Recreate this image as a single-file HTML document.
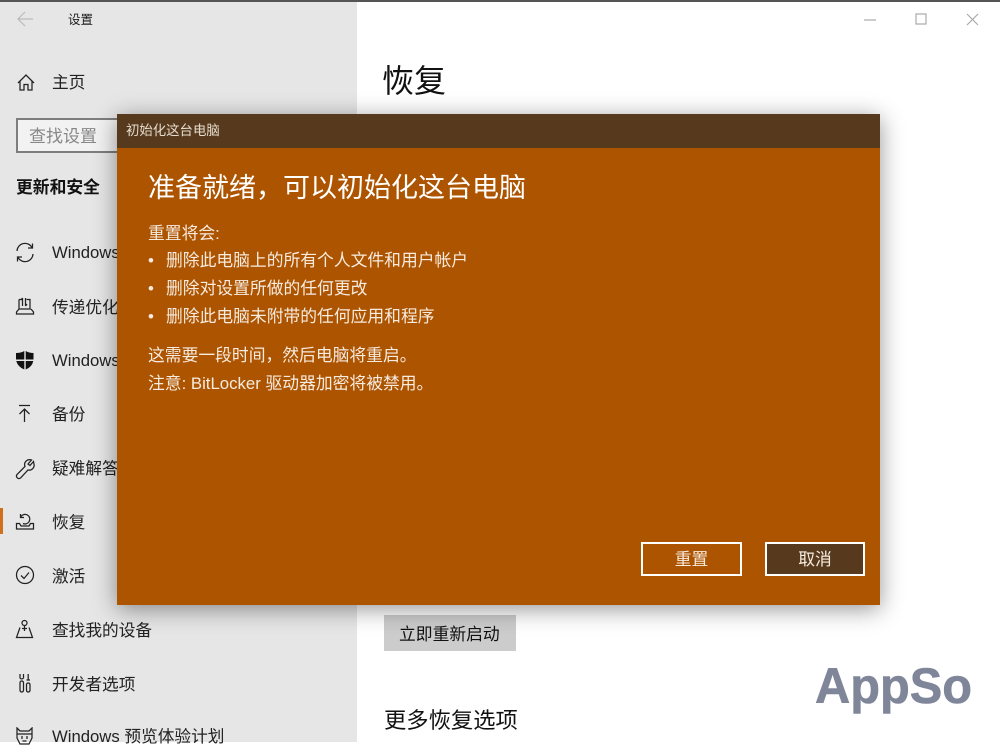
<!DOCTYPE html>
<html lang="zh-CN"><head><meta charset="utf-8"><title>设置</title>
<style>
html,body{margin:0;padding:0;background:#fff}
body{width:1000px;height:742px;position:relative;overflow:hidden;font-family:"Liberation Sans","Noto Sans CJK SC",sans-serif;color:#1c1c1c;filter:blur(.3px)}
.t{position:absolute;white-space:nowrap;line-height:24px;height:24px}
.s{left:52px;font-size:16.7px;color:#222}
.w{color:#f7ebdf;font-size:16.8px;left:148px}
svg.i{position:absolute;left:14px;width:22px;height:22px;fill:none;stroke:#222;stroke-width:1.25}
#side{position:absolute;left:0;top:0;width:357px;height:742px;background:#e6e6e6}
#dlg{position:absolute;left:117px;top:114px;width:763px;height:491px;background:#ad5400;box-shadow:0 4px 22px rgba(0,0,0,.42)}
#hd{position:absolute;left:0;top:0;width:763px;height:34px;background:#573a1e}
.b{position:absolute;top:542px;height:30px;border:2px solid #fff;line-height:32px;text-align:center;font-size:16.8px;color:#f7ebdf}
</style></head><body>
<div id="side"></div>
<div style="position:absolute;left:0;top:0;width:1000px;height:2px;background:#555"></div>

<svg style="position:absolute;left:16px;top:10px" width="20" height="18" fill="none" stroke="#bbb" stroke-width="1.2"><path d="M2 9H17M9 2L2 9L9 16"/></svg>
<div class="t" style="left:68px;top:8px;font-size:12.5px">设置</div>

<svg class="i" style="top:72px;left:16px" viewBox="0 0 22 22"><path d="M2 11L10 3L18 11M4 9.500V18H8V12.500H12V18H16V9.500"/></svg>
<div class="t s" style="top:71px">主页</div>

<div style="position:absolute;left:16px;top:118px;width:110px;height:31px;border:2px solid #7d7d7d;background:#f2f2f2"></div>
<div class="t" style="left:29px;top:125px;font-size:17px;color:#888">查找设置</div>
<div class="t" style="left:16px;top:176px;font-size:16.8px;font-weight:700;color:#111">更新和安全</div>

<svg class="i" style="top:242px" viewBox="0 0 22 22"><path d="M3 9A8 8 0 0 1 18 5.500M19 12A8 8 0 0 1 4 15.500M18.500 1.500V6H14M3.500 19.500V15H8"/></svg>
<div class="t s" style="top:241px">Windows 更新</div>
<svg class="i" style="top:296px" viewBox="0 0 22 22"><path d="M5 3.500H7.500M12.500 3.500H16V13H5V3.500M5 13L2.500 16V18H19.500V16L17 13M8.500 2V10M7 4L8.500 2M11.500 10V2M11.500 10L13 8"/></svg>
<div class="t s" style="top:296px">传递优化</div>
<svg class="i" style="top:350px;stroke:none;fill:#111" viewBox="0 0 22 22"><path d="M2 3Q7 3 10.300 1V9.500H2ZM11.700 1Q15 3 19.500 3V9.500H11.700ZM2.200 11H10.300V19.500Q4 17 2.200 11ZM11.700 11H19.300Q18 17 11.700 19.500Z"/></svg>
<div class="t s" style="top:349px">Windows 安全中心</div>
<svg class="i" style="top:404px" viewBox="0 0 22 22"><path d="M5 1.500H16M10.500 18V5M5.500 10L10.500 5L15.500 10"/></svg>
<div class="t s" style="top:403px">备份</div>
<svg class="i" style="top:458px" viewBox="0 0 22 22"><path d="M19.500 3.500L16 7.500L14 6L17.500 2A5 5 0 0 0 11 8.500L3 16.500A2.500 2.500 0 0 0 6.500 20L14 12A5 5 0 0 0 20 6Z"/></svg>
<div class="t s" style="top:457px">疑难解答</div>

<div style="position:absolute;left:0;top:508px;width:3px;height:26px;background:#d0701c"></div>
<svg class="i" style="top:512px" viewBox="0 0 22 22"><path d="M7 4.500A4.800 4.800 0 1 1 9 11.500M6.500 2V5.500H10M2.500 11.500H5.500L7 14H15L16.500 11.500H19.500V17H2.500Z"/></svg>
<div class="t s" style="top:511px">恢复</div>
<svg class="i" style="top:564px" viewBox="0 0 22 22"><circle cx="11" cy="11" r="8.500"/><path d="M7 11.500L10 14.500L15 8.500"/></svg>
<div class="t s" style="top:565px">激活</div>
<svg class="i" style="top:619px" viewBox="0 0 22 22"><circle cx="10.500" cy="4" r="2.500"/><path d="M10.500 6.500V12M8 9.500H13M6 8.500L2.500 18.500H18.500L15 8.500"/></svg>
<div class="t s" style="top:619px">查找我的设备</div>
<svg class="i" style="top:672px" viewBox="0 0 22 22"><rect x="6" y="9" width="3.500" height="11" rx="1.700"/><rect x="12.500" y="11" width="3.500" height="9" rx="1.700"/><path d="M6 2V6Q7.700 8 9.500 6V2M14.200 2V8M12.500 8H16"/></svg>
<div class="t s" style="top:673px">开发者选项</div>
<svg class="i" style="top:727px" viewBox="0 0 22 22"><path d="M3 1L6 4H15L18 1V11L15 17H6L3 11ZM3 7H18M8 9V12M13 9V12M8.500 14H12.500"/></svg>
<div class="t s" style="top:725px">Windows 预览体验计划</div>

<svg style="position:absolute;left:860px;top:8px" width="125" height="24" fill="none" stroke="#aaa" stroke-width="1.2"><path d="M4 12H16"/><rect x="56" y="6" width="10" height="10"/><path d="M107 6L118 17M118 6L107 17"/></svg>

<div class="t" style="left:382px;top:58px;font-size:32px;line-height:46px;height:46px;color:#111">恢复</div>

<div style="position:absolute;left:384px;top:615px;width:132px;height:36px;background:#cccccc"></div>
<div class="t" style="left:399px;top:623px;font-size:16.8px;color:#111">立即重新启动</div>
<div class="t" style="left:384px;top:705px;font-size:22.3px;line-height:32px;height:32px;color:#111">更多恢复选项</div>

<svg style="position:absolute;left:810px;top:655px" width="170" height="70"><text x="5" y="48" font-family="Liberation Sans" font-weight="700" font-size="50" fill="#80869a" stroke="#80869a" stroke-width=".6" textLength="157" lengthAdjust="spacingAndGlyphs">AppSo</text></svg>

<div id="dlg"><div id="hd"></div></div>
<div class="t" style="left:126px;top:119px;font-size:13.4px;color:#e6dccf">初始化这台电脑</div>
<div class="t" style="left:148px;top:168px;font-size:27px;line-height:40px;height:40px;color:#fff">准备就绪，可以初始化这台电脑</div>
<div class="t w" style="top:222px">重置将会:</div>
<div class="t w" style="top:249px">•</div><div class="t w" style="left:166px;top:249px">删除此电脑上的所有个人文件和用户帐户</div>
<div class="t w" style="top:277px">•</div><div class="t w" style="left:166px;top:277px">删除对设置所做的任何更改</div>
<div class="t w" style="top:305px">•</div><div class="t w" style="left:166px;top:305px">删除此电脑未附带的任何应用和程序</div>
<div class="t w" style="top:344px">这需要一段时间，然后电脑将重启。</div>
<div class="t w" style="top:372px">注意: BitLocker 驱动器加密将被禁用。</div>
<div class="b" style="left:641px;width:97px;background:#ad5400">重置</div>
<div class="b" style="left:765px;width:96px;background:#573a1e">取消</div>
</body></html>
